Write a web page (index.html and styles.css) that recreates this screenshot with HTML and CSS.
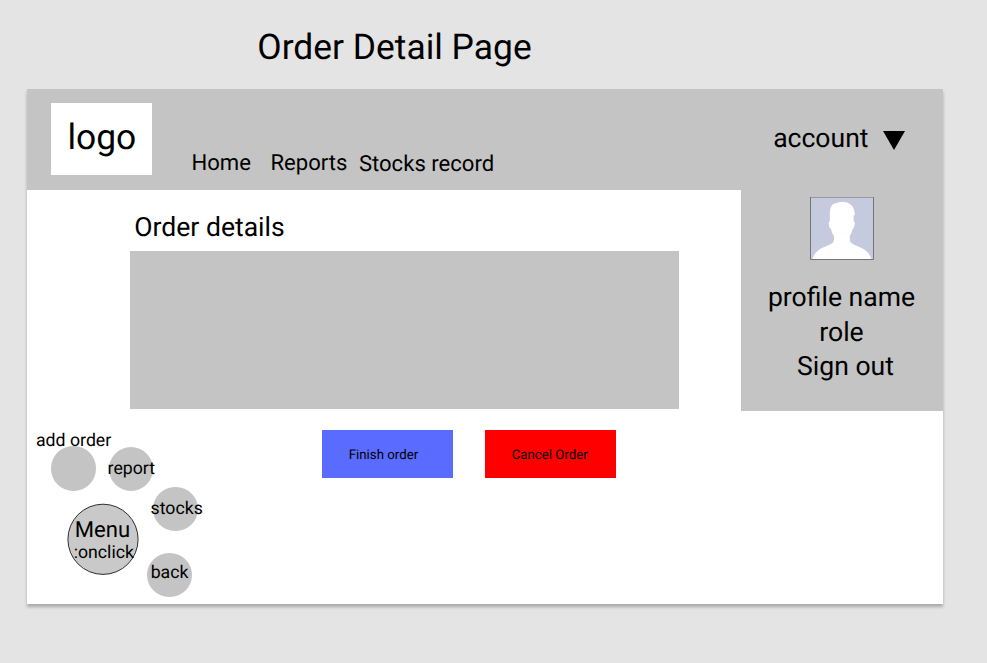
FILE: index.html
```html
<!DOCTYPE html>
<html lang="en">
<head>
<meta charset="utf-8">
<title>Order Detail Page</title>
<link rel="stylesheet" href="styles.css">
</head>
<body>
<h1 class="page-title">Order Detail Page</h1>
<div class="card">
  <header class="topbar">
    <div class="logo">logo</div>
    <nav class="nav">
      <a class="nav-home">Home</a>
      <a class="nav-reports">Reports</a>
      <a class="nav-stocks">Stocks record</a>
    </nav>
    <div class="account">
      <span>account</span>
      <svg class="caret" width="22" height="19" viewBox="0 0 22 19"><path d="M0 0H22L11 19Z"/></svg>
    </div>
  </header>
  <div class="body">
    <main class="main">
      <h2 class="section-title">Order details</h2>
      <div class="details"></div>
      <div class="actions">
        <button class="btn finish">Finish order</button>
        <button class="btn cancel">Cancel Order</button>
      </div>
    </main>
    <aside class="profile">
      <svg class="avatar" width="64" height="63" viewBox="0 0 64 63">
        <rect width="64" height="63" fill="#c5cadf"/>
        <path fill="#fff" d="M2.5 62C4 56 8 53 13 50.5C18 48.3 22.5 47 23.5 44.5C24.3 42.5 24 40.5 23.8 38.5C22.5 37 21.5 34.5 21 32C19.5 31.5 18.8 29 18.7 26.5C18.7 25 19 24.4 20 24.5C19.8 20 19.5 14 20.8 10.5C22 7.5 24 6.5 26 6.3C28 5 31 4.7 34 5C39 5.5 42.5 8 43.8 12C44.5 14 45 16 44.7 18L43.5 19C43.8 21 43.8 23 43.6 24.5C44.8 24.5 45 25.5 44.7 27C44.3 29.5 43.8 31.5 42.5 32.2C42 35 41 37 39.8 38.8C39.7 41 39.5 43 40.3 44.8C41.5 47 46 48.5 50.5 50.5C55.5 52.8 60 56.5 61.3 62Z"/>
        <path d="M0 .5H64" stroke="#9698a4"/>
        <path d="M.5 0V62.5H63.5V0" fill="none" stroke="#72747b"/>
      </svg>
      <div class="profile-line">profile name</div>
      <div class="profile-line">role</div>
      <div class="profile-line sign-out">Sign out</div>
    </aside>
  </div>
  <div class="radial">
    <span class="bubble b-add"></span><span class="label l-add">add order</span>
    <span class="bubble b-report"></span><span class="label l-report">report</span>
    <span class="bubble b-stocks"></span><span class="label l-stocks">stocks</span>
    <span class="bubble b-back"></span><span class="label l-back">back</span>
    <svg class="hub" width="72" height="72" viewBox="0 0 72 72"><circle cx="36" cy="36.3" r="35.1" fill="#c9c9c9" stroke="#000" stroke-width=".8"/></svg>
    <span class="label l-menu">Menu</span><span class="label l-click">:onclick</span>
  </div>
</div>
</body>
</html>
```
FILE: styles.css
```css
* { box-sizing: border-box; }
body {
  margin: 0;
  height: 663px;
  padding-top: 26px;
  background: #e4e4e4;
  color: #000;
  font-family: Roboto, "Liberation Sans", sans-serif;
  text-rendering: geometricPrecision;
  overflow: hidden;
}
.page-title {
  margin: 0 0 21px 257.3px;
  font-size: 35.4px;
  line-height: 42px;
  font-weight: 400;
}
.card {
  position: relative;
  width: 916px;
  height: 515px;
  margin-left: 27px;
  background: #fff;
  box-shadow: 0 3px 3px rgba(0, 0, 0, .25);
}
.topbar {
  display: flex;
  height: 101px;
  padding-left: 24.4px;
  background: #c4c4c4;
}
.logo {
  width: 101px;
  height: 72px;
  margin-top: 14px;
  padding-top: 13px;
  background: #fff;
  font-size: 35.4px;
  line-height: 42px;
  text-align: center;
}
.nav {
  display: flex;
  margin: 61px 0 0 39px;
  font-size: 22.1px;
  line-height: 26px;
}
.nav-home { width: 79px; }
.nav-reports { width: 88.5px; }
.nav-stocks { padding-top: 1px; }
.account {
  display: flex;
  gap: 14px;
  margin: 35px 38.5px 0 auto;
  font-size: 26.55px;
  line-height: 30px;
}
.caret { margin-top: 7px; }
.body {
  display: flex;
  justify-content: space-between;
}
.main {
  width: 549px;
  margin-left: 103px;
}
.section-title {
  margin: 0;
  padding: 23px 0 8px 4.3px;
  font-size: 26.55px;
  line-height: 30px;
  font-weight: 400;
}
.details {
  height: 158px;
  background: #c4c4c4;
}
.actions {
  display: flex;
  gap: 32px;
  margin: 21px 0 0 192px;
}
.btn {
  width: 131px;
  height: 48px;
  padding: 3px 0 0 26.7px;
  border: 0;
  font: 13.28px/15px Roboto, "Liberation Sans", sans-serif;
  text-align: left;
  text-rendering: inherit;
  color: #000;
}
.finish { background: #5a6cff; }
.cancel { background: #f00; }
.profile {
  width: 202px;
  height: 221px;
  padding-top: 7px;
  background: #c4c4c4;
  text-align: center;
  font-size: 26.55px;
  line-height: 34.7px;
}
.avatar {
  display: block;
  margin: 0 auto 21px;
}
.profile-line { margin-left: -1px; }
.sign-out { padding-left: 8px; }
.radial {
  position: absolute;
  inset: 0 0 0 -1px;
  font-size: 17.7px;
  line-height: 20px;
}
.bubble {
  position: absolute;
  width: 44.5px;
  height: 44.5px;
  border-radius: 50%;
  background: #c4c4c4;
}
.label { position: absolute; white-space: nowrap; }
.b-add { left: 25.2px; top: 357px; }
.l-add { left: 10px; top: 342px; }
.b-report { left: 82.8px; top: 357.8px; }
.l-report { left: 81.6px; top: 370px; }
.b-stocks { left: 127.4px; top: 397.8px; }
.l-stocks { left: 124.6px; top: 410px; }
.b-back { left: 121px; top: 463.8px; }
.l-back { left: 124.7px; top: 474px; }
.hub { position: absolute; left: 41px; top: 414px; }
.l-menu { left: 48.7px; top: 428px; font-size: 22.1px; line-height: 26px; }
.l-click { left: 47.7px; top: 454px; }
```
